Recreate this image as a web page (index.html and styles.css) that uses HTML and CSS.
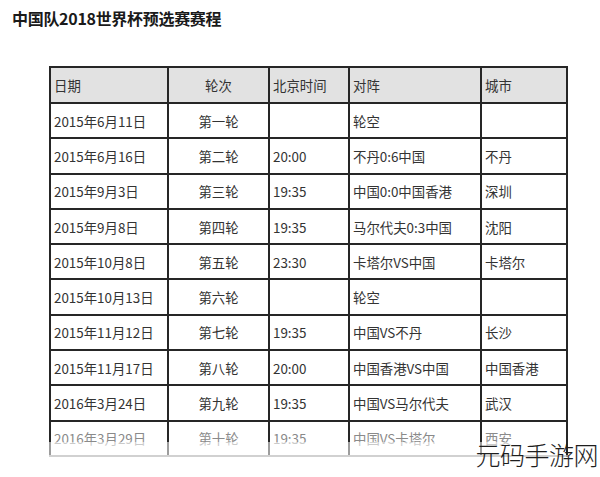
FILE: index.html
```html
<!DOCTYPE html>
<html lang="zh">
<head>
<meta charset="utf-8">
<link rel="stylesheet" href="styles.css">
</head>
<body>
<div class="page">
  <h1 class="title">中国队2018世界杯预选赛赛程</h1>
  <div class="table-wrap">
    <table class="schedule">
      <colgroup>
        <col class="c1"><col class="c2"><col class="c3"><col class="c4"><col class="c5">
      </colgroup>
      <thead>
        <tr><th>日期</th><th class="center">轮次</th><th>北京时间</th><th>对阵</th><th>城市</th></tr>
      </thead>
      <tbody>
        <tr><td>2015年6月11日</td><td class="center">第一轮</td><td></td><td>轮空</td><td></td></tr>
        <tr><td>2015年6月16日</td><td class="center">第二轮</td><td>20:00</td><td>不丹0:6中国</td><td>不丹</td></tr>
        <tr><td>2015年9月3日</td><td class="center">第三轮</td><td>19:35</td><td>中国0:0中国香港</td><td>深圳</td></tr>
        <tr><td>2015年9月8日</td><td class="center">第四轮</td><td>19:35</td><td>马尔代夫0:3中国</td><td>沈阳</td></tr>
        <tr><td>2015年10月8日</td><td class="center">第五轮</td><td>23:30</td><td>卡塔尔VS中国</td><td>卡塔尔</td></tr>
        <tr><td>2015年10月13日</td><td class="center">第六轮</td><td></td><td>轮空</td><td></td></tr>
        <tr><td>2015年11月12日</td><td class="center">第七轮</td><td>19:35</td><td>中国VS不丹</td><td>长沙</td></tr>
        <tr><td>2015年11月17日</td><td class="center">第八轮</td><td>20:00</td><td>中国香港VS中国</td><td>中国香港</td></tr>
        <tr><td>2016年3月24日</td><td class="center">第九轮</td><td>19:35</td><td>中国VS马尔代夫</td><td>武汉</td></tr>
        <tr class="faded"><td>2016年3月29日</td><td class="center">第十轮</td><td>19:35</td><td>中国VS卡塔尔</td><td>西安</td></tr>
      </tbody>
    </table>
    <div class="fade-overlay"></div>
  </div>
  <div class="watermark">元码手游网</div>
</div>
</body>
</html>
```

FILE: styles.css
```css
html, body {
  margin: 0;
  padding: 0;
  background: #ffffff;
}

.page {
  position: relative;
  width: 600px;
  height: 477px;
  overflow: hidden;
  font-family: "Noto Sans CJK SC", "Microsoft YaHei", sans-serif;
  color: #333333;
}

.title {
  margin: 0;
  padding: 7px 0 0 12px;
  font-size: 16px;
  line-height: 22px;
  font-weight: 700;
  color: #1a1a1a;
  letter-spacing: -0.3px;
}

.table-wrap {
  position: relative;
  margin: 37px 0 0 49px;
  width: 517px;
}

.schedule {
  border-collapse: collapse;
  width: 517px;
  table-layout: fixed;
  font-size: 13.4px;
}

.c1 { width: 118px; }
.c2 { width: 101px; }
.c3 { width: 80px; }
.c4 { width: 132px; }
.c5 { width: 86px; }

.schedule th,
.schedule td {
  border: 2px solid #262626;
  padding: 0 0 0 3px;
  text-align: left;
  font-weight: 400;
  line-height: 18px;
  white-space: nowrap;
  color: #333333;
}

.schedule th {
  height: 34px;
  background: #e2e2e2;
}

.schedule td {
  height: 33.3px;
}

.schedule .center {
  text-align: center;
  padding-left: 0;
}

.schedule tr.faded td {
  color: #8a8a8a;
  border-bottom-color: #9a9a9a;
}

.fade-overlay {
  position: absolute;
  left: 0;
  right: 0;
  bottom: -1px;
  height: 16px;
  background: rgba(255, 255, 255, 0.55);
}

.watermark {
  position: absolute;
  right: 2px;
  bottom: 10px;
  font-size: 25px;
  line-height: 26px;
  font-weight: 300;
  color: #1e1e1e;
  letter-spacing: -0.5px;
}
```
